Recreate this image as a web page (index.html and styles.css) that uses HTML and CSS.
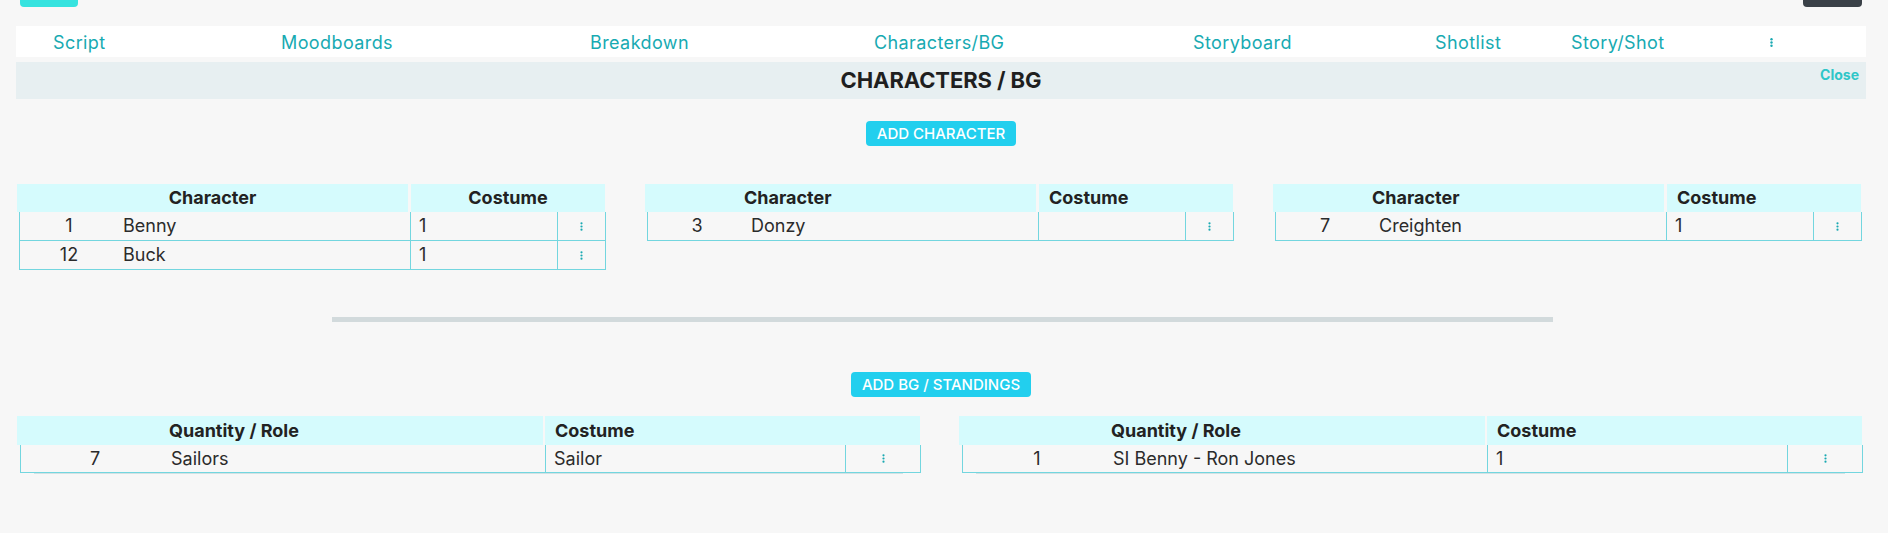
FILE: index.html
```html
<!DOCTYPE html>
<html>
<head>
<meta charset="utf-8">
<link rel="stylesheet" href="styles.css">
</head>
<body>
<div class="top">
  <span class="top-btn teal"></span>
  <span class="top-btn dark"></span>
</div>
<div class="page">
  <nav class="nav">
    <a class="nav-item w-script">Script</a>
    <a class="nav-item w-mood">Moodboards</a>
    <a class="nav-item w-break">Breakdown</a>
    <a class="nav-item w-char">Characters/BG</a>
    <a class="nav-item w-story">Storyboard</a>
    <a class="nav-item w-shot">Shotlist</a>
    <a class="nav-item w-ss">Story/Shot</a>
    <span class="nav-item dots"><svg width="3" height="9" viewBox="0 0 3 9"><circle cx="1.5" cy="1.3" r="1.2"/><circle cx="1.5" cy="4.5" r="1.2"/><circle cx="1.5" cy="7.7" r="1.2"/></svg></span>
  </nav>
  <div class="titlebar">
    <span></span>
    <h1 class="title">CHARACTERS / BG</h1>
    <a class="close">Close</a>
  </div>

  <div class="btn-row first"><button class="add-btn">ADD CHARACTER</button></div>

  <div class="tables chars">
    <div class="tbl ct centered">
      <div class="thead"><div class="th">Character</div><div class="th">Costume</div></div>
      <div class="tr"><div class="td num">1</div><div class="td name">Benny</div><div class="td cost">1</div><div class="td act"><svg width="3" height="9" viewBox="0 0 3 9"><circle cx="1.5" cy="1.3" r="1.1"/><circle cx="1.5" cy="4.5" r="1.1"/><circle cx="1.5" cy="7.7" r="1.1"/></svg></div></div>
      <div class="tr"><div class="td num">12</div><div class="td name">Buck</div><div class="td cost">1</div><div class="td act"><svg width="3" height="9" viewBox="0 0 3 9"><circle cx="1.5" cy="1.3" r="1.1"/><circle cx="1.5" cy="4.5" r="1.1"/><circle cx="1.5" cy="7.7" r="1.1"/></svg></div></div>
    </div>
    <div class="tbl ct">
      <div class="thead"><div class="th">Character</div><div class="th">Costume</div></div>
      <div class="tr"><div class="td num">3</div><div class="td name">Donzy</div><div class="td cost"></div><div class="td act"><svg width="3" height="9" viewBox="0 0 3 9"><circle cx="1.5" cy="1.3" r="1.1"/><circle cx="1.5" cy="4.5" r="1.1"/><circle cx="1.5" cy="7.7" r="1.1"/></svg></div></div>
    </div>
    <div class="tbl ct">
      <div class="thead"><div class="th">Character</div><div class="th">Costume</div></div>
      <div class="tr"><div class="td num">7</div><div class="td name">Creighten</div><div class="td cost">1</div><div class="td act"><svg width="3" height="9" viewBox="0 0 3 9"><circle cx="1.5" cy="1.3" r="1.1"/><circle cx="1.5" cy="4.5" r="1.1"/><circle cx="1.5" cy="7.7" r="1.1"/></svg></div></div>
    </div>
  </div>

  <div class="divider"></div>

  <div class="btn-row second"><button class="add-btn">ADD BG / STANDINGS</button></div>

  <div class="tables bgs">
    <div class="tbl bt">
      <div class="thead"><div class="th">Quantity / Role</div><div class="th">Costume</div></div>
      <div class="tr"><div class="td num">7</div><div class="td name">Sailors</div><div class="td cost">Sailor</div><div class="td act"><svg width="3" height="9" viewBox="0 0 3 9"><circle cx="1.5" cy="1.3" r="1.1"/><circle cx="1.5" cy="4.5" r="1.1"/><circle cx="1.5" cy="7.7" r="1.1"/></svg></div></div>
      <div class="under"></div>
    </div>
    <div class="tbl bt">
      <div class="thead"><div class="th">Quantity / Role</div><div class="th">Costume</div></div>
      <div class="tr"><div class="td num">1</div><div class="td name">SI Benny - Ron Jones</div><div class="td cost">1</div><div class="td act"><svg width="3" height="9" viewBox="0 0 3 9"><circle cx="1.5" cy="1.3" r="1.1"/><circle cx="1.5" cy="4.5" r="1.1"/><circle cx="1.5" cy="7.7" r="1.1"/></svg></div></div>
      <div class="under"></div>
    </div>
  </div>
</div>
</body>
</html>
```

FILE: styles.css
```css
* { box-sizing: border-box; }
html, body { margin: 0; padding: 0; }
body {
  background: #f7f7f7;
  font-family: Inter, "Noto Sans", sans-serif;
  color: #2a2a2a;
  width: 1888px;
  height: 533px;
  overflow: hidden;
}
.top {
  height: 26px;
  display: flex;
  justify-content: space-between;
  align-items: flex-start;
  padding: 0 26px 0 20px;
}
.top-btn {
  display: block;
  height: 7px;
  border-radius: 0 0 4px 4px;
}
.top-btn.teal { width: 58px; background: #36e3df; }
.top-btn.dark { width: 59px; background: #3a4148; }

.page { padding: 0 22px 0 16px; }

.nav {
  height: 31px;
  background: #ffffff;
  display: flex;
  align-items: center;
  padding-left: 37px;
}
.nav-item {
  color: #17aab2;
  font-size: 18px;
  line-height: 31px;
  padding-top: 2px;
  letter-spacing: 0.4px;
  white-space: nowrap;
}
.w-script { width: 228px; }
.w-mood { width: 309px; }
.w-break { width: 284px; }
.w-char { width: 319px; }
.w-story { width: 242px; }
.w-shot { width: 136px; }
.w-ss { width: 199px; }
.dots { display: flex; align-items: center; height: 31px; }
.dots svg, .act svg { fill: #1aa9b2; display: block; }

.titlebar {
  margin-top: 5px;
  height: 37px;
  background: #e7eff1;
  display: grid;
  grid-template-columns: 1fr auto 1fr;
}
.title {
  margin: 0;
  font-size: 22px;
  font-weight: 700;
  line-height: 37px;
  color: #1f1f1f;
  letter-spacing: -0.1px;
}
.close {
  justify-self: end;
  align-self: start;
  margin-top: 4px;
  padding-right: 7px;
  font-size: 14px;
  font-weight: 700;
  line-height: 17px;
  color: #2fc6c8;
}

.btn-row { display: flex; justify-content: center; }
.btn-row.first { margin-top: 22px; }
.btn-row.second { margin-top: 50px; }
.add-btn {
  height: 25px;
  border: none;
  border-radius: 4px;
  background: #22cfee;
  color: #ffffff;
  font-family: Inter, "Noto Sans", sans-serif;
  font-size: 15px;
  font-weight: 500;
  padding: 0 11px;
  line-height: 25px;
}

.tables {
  display: flex;
  align-items: flex-start;
  margin-left: 1px;
  gap: 39px;
}
.chars { margin-top: 38px; }
.bgs { margin-top: 19px; }

.tbl { font-size: 18px; }
.ct { width: 589px; }
.bt { width: 903px; }

.thead { display: grid; }
.ct .thead { grid-template-columns: 391px 194px; column-gap: 3px; height: 28px; }
.bt .thead { grid-template-columns: 526px 375px; column-gap: 2px; height: 29px; }
.th {
  background: #d5fbfd;
  font-weight: 700;
  color: #222;
  line-height: 28px;
  white-space: nowrap;
}
.bt .th { line-height: 29px; }
.ct .th:first-child { padding-left: 99px; }
.ct .th:last-child { padding-left: 10px; }
.ct.centered .th { padding-left: 0; text-align: center; }
.bt .th:first-child { padding-left: 152px; }
.bt .th:last-child { padding-left: 10px; }

.tr {
  display: grid;
  border: 1px solid #73d6df;
  border-top: none;
  background: #f7f7f7;
}
.ct .tr { margin-left: 2px; width: 587px; grid-template-columns: 98px 293px 147px 1fr; height: 29px; }
.bt .tr { margin-left: 3px; width: 901px; grid-template-columns: 148px 377px 300px 1fr; height: 28px; }
.td {
  line-height: 28px;
  white-space: nowrap;
  color: #2b2b2b;
}
.bt .td { line-height: 27px; }
.num { text-align: center; }
.name { padding-left: 5px; border-right: 1px solid #73d6df; }
.bt .name { padding-left: 2px; }
.cost { padding-left: 8px; border-right: 1px solid #73d6df; }
.act { display: flex; align-items: center; justify-content: center; }

.under {
  height: 1px;
  margin: 0 17px 0 17px;
  background: #d3e2e4;
}

.divider {
  width: 1221px;
  height: 5px;
  margin: 47px auto 0;
  background: #d2dadc;
  position: relative;
  left: 1px;
}
```
